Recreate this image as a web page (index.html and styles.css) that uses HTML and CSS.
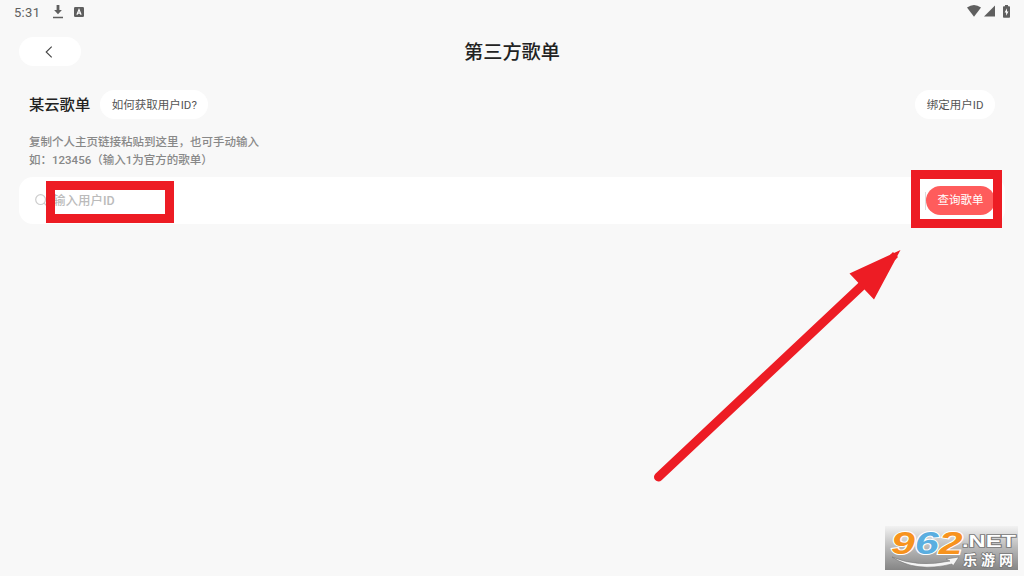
FILE: index.html
```html
<!DOCTYPE html>
<html lang="zh-CN">
<head>
    <meta charset="UTF-8">
    <meta name="viewport" content="width=device-width, initial-scale=1.0">
    <title>第三方歌单</title>
    <link rel="stylesheet" href="styles.css">
</head>
<body>
    <div class="status-bar">
        <span class="time">5:31</span>
        <svg class="icon-download" width="10" height="14" viewBox="0 0 10 14">
            <path d="M3.600 0h2.800v5h2.500L5 9.200 1.100 5h2.500zM0 11.700h10v1.500H0z"/>
        </svg>
        <svg class="icon-app" width="10" height="10" viewBox="0 0 10 10">
            <rect width="10" height="10" rx="1.3"/>
            <path d="M2.9 7.8L5 2.6l2.1 5.2M3.7 6.1h2.6" fill="none" stroke="#fff" stroke-width="1.2"/>
        </svg>
        <div class="status-right">
            <svg width="14" height="12" viewBox="0 0 14 12">
                <path d="M0 2.6Q7-2.4 14 2.6L7 11.8z"/>
            </svg>
            <svg width="11" height="12" viewBox="0 0 11 12">
                <path d="M11 .5v11H0z"/>
            </svg>
            <svg class="icon-battery" width="7" height="13" viewBox="0 0 7 13">
                <path d="M2 0h3v1.2h1.2q.8 0 .8.8v10q0 .8-.8.8H.8Q0 12.800 0 12V2q0-.8.8-.8H2z"/>
                <path d="M4 3.300L1.600 7.500h1.500v3.200l2.400-4.200H4z" fill="#fff"/>
            </svg>
        </div>
    </div>

    <div class="header">
        <div class="back">
            <svg width="8" height="12" viewBox="0 0 8 12">
                <path d="M6.700 .7L1.200 6l5.500 5.300" fill="none" stroke="#444" stroke-width="1.100"/>
            </svg>
        </div>
        <h1 class="title">第三方歌单</h1>
    </div>

    <div class="section">
        <h2 class="section-title">某云歌单</h2>
        <div class="pill">如何获取用户ID?</div>
        <div class="pill bind">绑定用户ID</div>
    </div>

    <p class="tips">复制个人主页链接粘贴到这里，也可手动输入<br>如：123456（输入1为官方的歌单）</p>

    <div class="search">
        <svg class="icon-search" width="13" height="13" viewBox="0 0 13 13">
            <circle cx="5.600" cy="5.600" r="4.900"/>
            <path d="M9 9l3 3"/>
        </svg>
        <span class="placeholder">输入用户ID</span>
        <span class="divider"></span>
        <div class="query">查询歌单</div>
    </div>

    <div class="mark mark-input"></div>
    <div class="mark mark-query"></div>
    <svg class="arrow" width="260" height="250" viewBox="0 0 260 250">
        <path d="M8.500 237L218 40" stroke="#ed1c24" stroke-width="9" stroke-linecap="round"/>
        <path d="M250.500 10L199.500 33.500l9 9.500 6 6.500 9.500 10z" fill="#ed1c24"/>
        <path d="M240 15l3-3 5 5-3 3z" fill="#ed1c24"/>
    </svg>

    <svg class="logo" width="133" height="44" viewBox="0 0 133 44">
        <defs>
            <linearGradient id="logo-bg" x1="0" y1="0" x2="0" y2="1">
                <stop offset="0" stop-color="#f2f2f2"/>
                <stop offset=".5" stop-color="#b8b8b8"/>
                <stop offset="1" stop-color="#858585"/>
            </linearGradient>
        </defs>
        <rect width="133" height="44" fill="url(#logo-bg)"/>
        <path d="M7 31Q33 42 65 35l-4-2 13-2-6 9-1-2Q31 47 7 31z" fill="#f4f4f4" stroke="#777" stroke-width=".6"/>
        <text class="logo-number" transform="translate(6 27.500) scale(1.34 1)"><tspan fill="#f7931e">9</tspan><tspan fill="#5aaee0">6</tspan><tspan fill="#f7931e">2</tspan></text>
        <text class="logo-net" x="77" y="21" textLength="54" lengthAdjust="spacingAndGlyphs">.NET</text>
        <text class="logo-cn" x="78" y="39" textLength="50">乐游网</text>
    </svg>
</body>
</html>
```

FILE: styles.css
```css
body {
    margin: 0;
    height: 576px;
    position: relative;
    overflow: hidden;
    background-color: #f8f8f8;
    font-family: Roboto, "Noto Sans CJK SC", sans-serif;
    color: #222;
}
svg {
    display: block;
    flex-shrink: 0;
}
.status-bar {
    display: flex;
    align-items: center;
    height: 24px;
    padding: 0 14px 0 14px;
    color: #5f5f5f;
    fill: #5f5f5f;
}
.time {
    width: 39px;
    font-size: 13px;
    letter-spacing: 0.3px;
}
.icon-app {
    margin-left: 11px;
}
.status-right {
    display: flex;
    align-items: center;
    margin: 0 0 2px auto;
    gap: 3px;
}
.icon-battery {
    margin-left: 5px;
}
.header {
    display: grid;
    grid-template-columns: 62px 1fr 62px;
    align-items: center;
    height: 55px;
    padding: 0 19px;
}
.back {
    display: flex;
    align-items: center;
    justify-content: center;
    height: 29px;
    border-radius: 15px;
    background-color: #fff;
}
.back svg {
    margin-right: 2px;
}
.title {
    margin: 0 0 2px;
    text-align: center;
    font-size: 19.2px;
    font-weight: 500;
}
.section {
    display: flex;
    align-items: center;
    height: 51px;
    padding: 0 29px;
}
.section-title {
    margin: 0 10px 3px 0;
    font-size: 15.3px;
    font-weight: 500;
}
.pill {
    height: 29px;
    line-height: 30px;
    padding: 0 11.5px;
    border-radius: 15px;
    background-color: #fff;
    font-size: 11.5px;
    color: #555;
}
.bind {
    margin-left: auto;
}
.tips {
    margin: 4px 29px 8px;
    font-size: 11.5px;
    line-height: 17.5px;
    font-weight: 500;
    color: #888;
}
.search {
    display: flex;
    align-items: center;
    height: 47px;
    margin: 0 19px;
    padding: 0 10px 0 16px;
    box-sizing: border-box;
    border-radius: 14px;
    background-color: #fff;
}
.icon-search {
    fill: none;
    stroke: #ccc;
    stroke-width: 1.2;
}
.placeholder {
    margin: 0 0 2px 5px;
    font-size: 12.5px;
    font-weight: 500;
    color: #bbb;
}
.divider {
    width: 1px;
    height: 18px;
    margin-left: auto;
    background-color: #ddd;
}
.query {
    height: 29px;
    line-height: 29px;
    padding: 0 11.5px;
    border-radius: 15px;
    background-color: #ff5c5c;
    color: #fff;
    font-size: 11.5px;
}
/* red highlight frames laid over the page */
.mark {
    position: absolute;
    box-sizing: border-box;
    border: 9px solid #ed1c24;
}
.mark-input {
    left: 46px;
    top: 181px;
    width: 128px;
    height: 42px;
}
.mark-query {
    left: 911px;
    top: 170px;
    width: 91px;
    height: 58px;
}
.arrow {
    position: absolute;
    left: 650px;
    top: 240px;
}
.logo {
    position: absolute;
    left: 885px;
    top: 526px;
}
.logo-number {
    font: italic bold 32px "Liberation Sans", sans-serif;
    stroke: #fff;
    stroke-width: 2px;
    paint-order: stroke;
}
.logo-net {
    font: bold 17px "Liberation Sans", sans-serif;
    fill: #fff;
    stroke: #777;
    stroke-width: 1.6px;
    paint-order: stroke;
}
.logo-cn {
    font: bold 14px "Noto Sans CJK SC", sans-serif;
    fill: #fff;
    stroke: #777;
    stroke-width: 1.6px;
    paint-order: stroke;
}
```
